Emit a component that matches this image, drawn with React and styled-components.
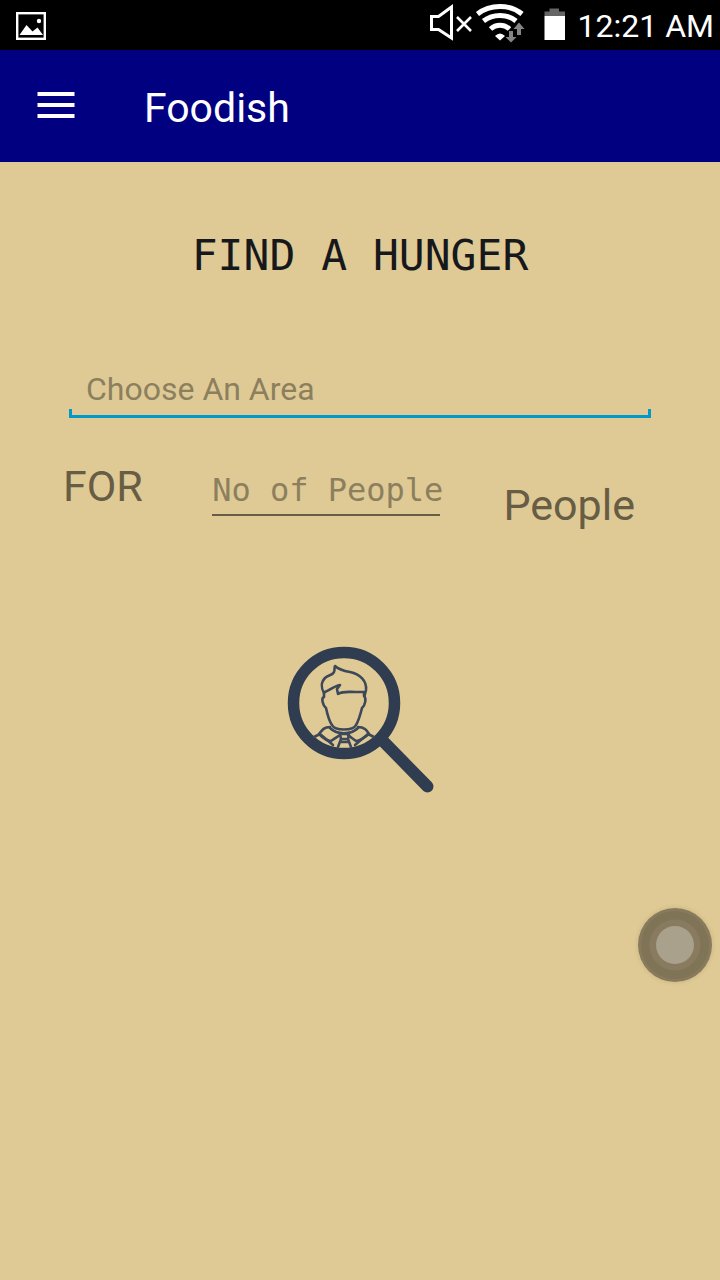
import React from "react";
import styled, { createGlobalStyle } from "styled-components";

const GlobalStyle = createGlobalStyle`
  *, *::before, *::after { box-sizing: border-box; }
  body { margin: 0; background: #dfca95; }
  button { border: 0; padding: 0; background: none; cursor: pointer; }
`;

const sans = `Roboto, "Liberation Sans", sans-serif`;
const mono = `"DejaVu Sans Mono", "Liberation Mono", monospace`;

const Screen = styled.div`
  min-height: 100vh;
  display: flex;
  flex-direction: column;
  background: #dfca95;
  font-family: ${sans};
`;

const StatusBar = styled.div`
  display: flex;
  align-items: center;
  justify-content: space-between;
  height: 50px;
  padding: 2px 6px 0 16px;
  background: #000;
  color: #fff;
`;

const StatusGroup = styled.div`
  display: flex;
  align-items: center;
`;

const Clock = styled.time`
  margin-left: 10px;
  font-size: 32px;
  line-height: 48px;
  white-space: nowrap;
`;

const AppBar = styled.header`
  display: flex;
  align-items: center;
  gap: 68px;
  height: 112px;
  padding: 0 36px;
  background: #000080;
  color: #fff;
`;

const MenuButton = styled.button`
  display: flex;
  width: 40px;
  height: 40px;
`;

const AppTitle = styled.h1`
  margin: 0;
  padding-top: 4px;
  font-size: 41px;
  font-weight: 400;
  line-height: 48px;
`;

const Content = styled.main`
  flex: 1;
  padding-top: 67px;
`;

const Heading = styled.h2`
  margin: 0;
  color: #16181b;
  font-family: ${mono};
  font-size: 43px;
  font-weight: 400;
  line-height: 52px;
  text-align: center;
`;

const TextInput = styled.input`
  display: block;
  width: 100%;
  border: 0;
  padding: 0;
  outline: 0;
  background: transparent;
  color: #16181b;
  font-family: ${(p) => (p.$mono ? mono : sans)};
  font-size: 32px;
  line-height: 40px;
  height: 40px;
  &::placeholder { color: #8c7f5e; opacity: 1; }
`;

const AreaField = styled.div`
  margin: 88px 69px 0;
  ${TextInput} { padding: 0 17px; }
`;

const Bracket = styled.div`
  height: 9px;
  border: 3px solid #0099cc;
  border-top: 0;
`;

const PeopleRow = styled.div`
  display: flex;
  align-items: flex-start;
  justify-content: space-between;
  margin-top: 43px;
  padding: 0 85px 0 63px;
`;

const RowLabel = styled.label`
  padding-top: ${(p) => (p.$low ? 19 : 0)}px;
  color: #675d44;
  font-size: 43px;
  line-height: 50px;
`;

const CountField = styled.div`
  width: 228px;
  margin-top: 9px;
  margin-left: 6px;
  padding-bottom: 4px;
  border-bottom: 2px solid #675d44;
  ${TextInput} { width: 236px; }
`;

const SearchButton = styled.button`
  display: block;
  margin: 110px auto 0;
  width: 160px;
  height: 160px;
`;

const AssistButton = styled.button`
  position: absolute;
  top: 902px;
  right: 2px;
  width: 86px;
  height: 86px;
`;

function PictureIcon() {
  return (
    <svg width="30" height="28" viewBox="0 0 30 28" aria-hidden="true">
      <rect x="1.2" y="1.2" width="27.6" height="25.6" fill="none" stroke="#fff" strokeWidth="2.4" />
      <path d="M3.5 23 10.5 13 16.5 19.5 21.5 15.5 27 23Z" fill="#fff" />
      <circle cx="23" cy="9" r="2.2" fill="#fff" />
    </svg>
  );
}

function SystemIcons() {
  return (
    <svg width="140" height="48" viewBox="428 2 140 48" aria-hidden="true">
      <path d="M431.5 16.5H438.5L451.5 7V38L438.5 29.5H431.5Z" fill="none" stroke="#fff" strokeWidth="3" />
      <path d="M457 17 471 31M471 17 457 31" stroke="#fff" strokeWidth="2.6" />
      <g fill="none" stroke="#fff" strokeWidth="5">
        <path d="M477.5 14C490 4 510 4 522 14" />
        <path d="M483.5 21C493 13.5 507 13.5 516 21" />
        <path d="M490.5 29C496 24 504 24 509.5 29" />
      </g>
      <path d="M495 36Q500 31 505 36L500 40.5Z" fill="#fff" />
      <path d="M511 42.5 505.5 37H509V31H513V37H516.5Z" fill="#858585" />
      <path d="M519 22.500 513.5 29H517V35H521V29H524.5Z" fill="#858585" />
      <path d="M544.5 11.5H549.5V8.5H559V11.5H565V16H544.5Z" fill="#656565" />
      <rect x="544.5" y="16" width="20.5" height="24" fill="#fff" />
    </svg>
  );
}

function MenuIcon() {
  return (
    <svg width="40" height="40" viewBox="0 0 40 40" aria-hidden="true">
      <path d="M1.5 8H38.5M1.5 19H38.5M1.5 30H38.5" stroke="#fff" strokeWidth="4" />
    </svg>
  );
}

function FindPersonIcon() {
  return (
    <svg width="160" height="160" viewBox="0 0 160 160" fill="none" stroke="#303c4f" aria-hidden="true">
      <circle cx="64" cy="63" r="50.5" strokeWidth="11.5" />
      <path d="M101 99 147.5 146.5" strokeWidth="12" strokeLinecap="round" />
      <g strokeWidth="2.6" strokeLinejoin="round" strokeLinecap="round" stroke="#3d485a">
        <path d="M44 53C41 48 41 42 45 38C48 35 53 35 54 32C55 30 54 28 55 26C59 30 64 31 70 32C80 34 87 41 86 50L84.5 56" />
        <path d="M45 52C50 50 54 46 60 45L57 49 58 54C63 51 69 52 75 52L84 52" />
        <path d="M44 53V57C41 58 42.5 65 46 68C47.5 75 49 81 52 85C55 91 73 91 76 85C79 80 80.5 74 82 68C85.5 65 86.5 58 84 56V53" />
        <path d="M50 88C57 95 71 95 78 88" />
        <path d="M50 87C44 87 42 90 39 94C43 98 47 101 51 101C55 98 57 97 60 95M78 87C85 87 87 91 89 94C84 98 80 101 76 101C72 98 70 97 68 95" />
        <path d="M34 97 40 94 53 105M94 97 88 94 75 105M60 94H69L68 99H61ZM61 99 58 107M68 99 71 107M61 102H69" />
      </g>
    </svg>
  );
}

function AssistIcon() {
  return (
    <svg width="86" height="86" viewBox="0 0 86 86" aria-hidden="true">
      <circle cx="43" cy="43" r="41" fill="#d8c28e" opacity="0.4" />
      <circle cx="43" cy="43" r="39" fill="#d2bd8a" opacity="0.5" />
      <circle cx="43" cy="43" r="37" fill="#887b5d" />
      <circle cx="43" cy="43" r="34" fill="#807457" />
      <circle cx="43" cy="43" r="25.5" fill="#887b5f" />
      <circle cx="43" cy="43" r="19" fill="#aaa18c" />
    </svg>
  );
}

export default function App() {
  return (
    <Screen>
      <GlobalStyle />
      <StatusBar>
        <PictureIcon />
        <StatusGroup>
          <SystemIcons />
          <Clock>12:21 AM</Clock>
        </StatusGroup>
      </StatusBar>
      <AppBar>
        <MenuButton type="button" aria-label="Menu">
          <MenuIcon />
        </MenuButton>
        <AppTitle>Foodish</AppTitle>
      </AppBar>
      <Content>
        <Heading>FIND A HUNGER</Heading>
        <AreaField>
          <TextInput type="text" aria-label="Choose An Area" placeholder="Choose An Area" />
          <Bracket />
        </AreaField>
        <PeopleRow>
          <RowLabel htmlFor="people-count">FOR</RowLabel>
          <CountField>
            <TextInput $mono id="people-count" type="text" inputMode="numeric" placeholder="No of People" />
          </CountField>
          <RowLabel $low htmlFor="people-count">People</RowLabel>
        </PeopleRow>
        <SearchButton type="button" aria-label="Find">
          <FindPersonIcon />
        </SearchButton>
      </Content>
      <AssistButton type="button" aria-label="Assistive touch">
        <AssistIcon />
      </AssistButton>
    </Screen>
  );
}
